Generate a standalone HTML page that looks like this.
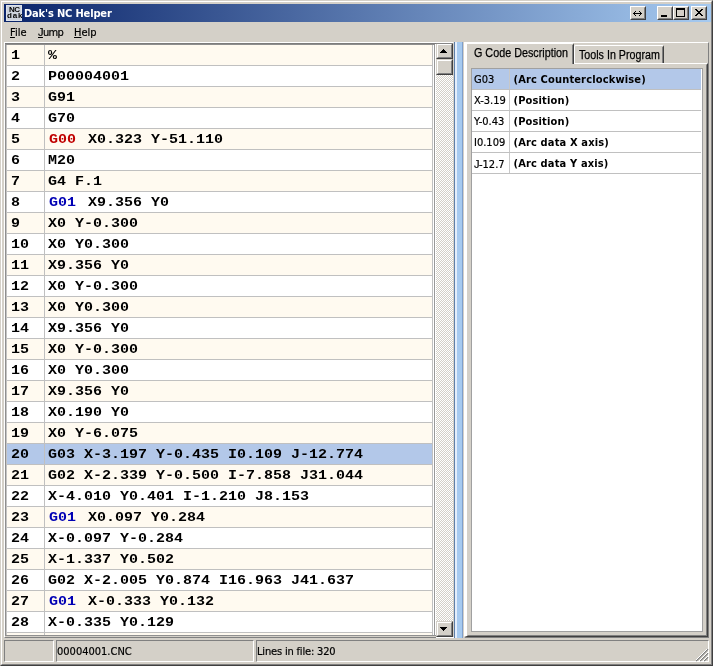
<!DOCTYPE html>
<html><head><meta charset="utf-8"><title>Dak's NC Helper</title>
<style>
*{box-sizing:border-box;margin:0;padding:0}
html,body{width:713px;height:666px;overflow:hidden;background:#d4d0c8}
body{position:relative;will-change:transform;font-family:"DejaVu Sans Condensed","Liberation Sans",sans-serif;font-size:11px;color:#000}
.abs{position:absolute}
#frame{position:absolute;left:0;top:0;width:713px;height:666px;border:1px solid;border-color:#d4d0c8 #404040 #404040 #d4d0c8}
#frame2{position:absolute;left:1px;top:1px;width:711px;height:664px;border:1px solid;border-color:#fff #808080 #808080 #fff}
#title{position:absolute;left:4px;top:4px;width:707px;height:18px;background:linear-gradient(to right,#0a246a 0%,#a6caf0 100%)}
#ticon{position:absolute;left:2px;top:1px;width:16px;height:16px;background:#ccd2dc;box-shadow:inset 0 0 0 1px #dde2ea;color:#000;font-family:"Liberation Sans",sans-serif;font-size:8px;line-height:8px;font-weight:bold;overflow:hidden}
#ticon span{position:absolute;left:1px;white-space:nowrap}
#ttext{position:absolute;left:20px;top:3px;color:#fff;font-weight:bold;font-size:11px;line-height:14px;white-space:nowrap;letter-spacing:-0.15px}
.tb{position:absolute;top:2px;width:16px;height:14px;background:#d4d0c8;border:1px solid;border-color:#fff #404040 #404040 #fff}
.tb:before{content:"";position:absolute;left:0;top:0;right:0;bottom:0;border:1px solid;border-color:#d4d0c8 #808080 #808080 #d4d0c8}
.tb svg{position:absolute;left:0;top:0}
#menu{position:absolute;left:4px;top:23px;width:705px;height:19px}
#menu span{position:absolute;top:3px;font-size:11px;line-height:13px;white-space:nowrap;-webkit-text-stroke:0.2px #000}
u{text-decoration:underline;text-decoration-skip-ink:none}
#list{position:absolute;left:4px;top:42px;width:450px;height:596px;background:#fff;border:1px solid;border-color:#fff #d4d0c8 #808080 #fff}
#list2{position:absolute;left:0;top:0;width:448px;height:594px;overflow:hidden}
.ln{position:absolute}
#rows{position:absolute;left:2px;top:2px;width:426px;height:590px;overflow:hidden;border-right:1px solid #c0c0c0}
#vline{position:absolute;left:429px;top:0;width:1px;height:594px;background:#989898}
.row{position:relative;height:21px;border-bottom:1px solid #c0c0c0;background:#fff;font-family:"Liberation Mono","DejaVu Sans Mono",monospace;font-weight:bold;font-size:15px;line-height:20px;white-space:nowrap}
.row.odd{background:#fffaf0}
.row.sel{background:#b3c8e9}
.row .n{position:absolute;left:0;top:0;width:38px;height:100%;border-right:1px solid #c0c0c0}
.row .n span{position:absolute;left:4px;top:1px;transform-origin:0 50%;transform:scaleY(0.9)}
.row .c{position:absolute;left:41px;top:1px;transform-origin:0 50%;transform:scaleY(0.9)}
.cr{color:#c00000;margin-left:1px;margin-right:3px}
.cb{color:#0000b4;margin-left:1px;margin-right:3px}
#sb{position:absolute;left:431px;top:0;width:17px;height:594px;background-color:#ebe9e5;background-image:conic-gradient(#fff 25%,#d4d0c8 0 50%,#fff 0 75%,#d4d0c8 0);background-size:2px 2px}
.btn{position:absolute;background:#d4d0c8;border:1px solid;border-color:#d4d0c8 #404040 #404040 #d4d0c8}
.btn:before{content:"";position:absolute;left:0;top:0;right:0;bottom:0;border:1px solid;border-color:#fff #808080 #808080 #fff}
.arr{position:absolute;left:4px;width:0;height:0;border:4px solid transparent}
#split{position:absolute;left:454px;top:42px;width:9px;height:596px;background:linear-gradient(to right,#5f7fa8 0 1px,#e4eefb 1px 3px,#a6caf0 3px 8px,#7f9fcb 8px 9px)}
#panel{position:absolute;left:464px;top:42px;width:245px;height:596px;border:1px solid;border-color:#fff #808080 #808080 #fff}
#tabc{position:absolute;left:464px;top:63px;width:244px;height:574px;border:1px solid;border-color:#fff #404040 #404040 #fff;border-left-width:3px}
#tabc:before{content:"";position:absolute;left:0;top:0;right:0;bottom:0;border:1px solid;border-color:#d4d0c8 #808080 #808080 #d4d0c8}
.tab{position:absolute;font-family:"Liberation Sans",sans-serif;font-size:12.5px;line-height:14px;white-space:nowrap;background:#d4d0c8}
#tab1{left:464px;top:43px;width:110px;height:21px;border:1px solid;border-color:#fff #404040 #d4d0c8 #fff;border-left-width:3px;border-bottom:none;border-radius:2px 2px 0 0}
#tab1:before{content:"";position:absolute;right:0;top:1px;bottom:0;width:1px;background:#808080}
#tab2{left:574px;top:45px;width:90px;height:18px;border:1px solid;border-color:#fff #404040 #d4d0c8 #fff;border-bottom:none;border-radius:2px 2px 0 0}
#tab2:before{content:"";position:absolute;right:0;top:1px;bottom:0;width:1px;background:#808080}
.tab span{position:absolute;-webkit-text-stroke:0.25px #000;transform-origin:0 0;transform:scaleX(0.845)}
#rl{position:absolute;left:471px;top:68px;width:232px;height:564px;background:#fff;border:1px solid #a0a0a0}
.rr{position:relative;margin-right:1px;height:21px;border-bottom:1px solid #c0c0c0;font-size:11px;line-height:20px;white-space:nowrap}
.rr.sel{background:#b3c8e9}
.rr .a{position:absolute;left:0;top:0;width:38px;height:100%;border-right:1px solid #c8c8c8;padding-left:2px;padding-top:1px;-webkit-text-stroke:0.2px #000}
.rr .b{position:absolute;left:41.5px;top:1px;font-weight:bold;letter-spacing:0.15px}
#status{position:absolute;left:4px;top:640px;width:705px;height:22px}
.sp{position:absolute;top:0;height:22px;border:1px solid;border-color:#808080 #fff #fff #808080;font-size:11px;line-height:22px;padding-left:0;white-space:nowrap;overflow:hidden;-webkit-text-stroke:0.2px #000}
</style></head><body>
<div id="frame"></div><div id="frame2"></div>
<div id="title">
 <div id="ticon"><span style="top:1px;left:3px;letter-spacing:-0.5px">NC</span><span style="top:7px;left:1px;letter-spacing:0.8px">dak</span></div>
 <div id="ttext">Dak's NC Helper</div>
 <div class="tb" style="left:626px"><svg width="14" height="12" viewBox="0 0 14 12"><path d="M4 4h1v1h-1zM8 4h1v1h-1zM3 5h1v1h-1zM9 5h1v1h-1zM2 6h9v1h-9zM3 7h1v1h-1zM9 7h1v1h-1zM4 8h1v1h-1zM8 8h1v1h-1z" fill="#000" shape-rendering="crispEdges"/></svg></div>
 <div class="tb" style="left:653px"><svg width="14" height="12" viewBox="0 0 14 12"><rect x="3" y="8" width="6" height="2" fill="#000"/></svg></div>
 <div class="tb" style="left:669px"><svg width="14" height="12" viewBox="0 0 14 12"><path d="M2 1H11V10H2Z M3 3V9H10V3Z" fill="#000" fill-rule="evenodd" shape-rendering="crispEdges"/></svg></div>
 <div class="tb" style="left:687px"><svg width="14" height="12" viewBox="0 0 14 12"><path d="M3 2h2v1h-2zM9 2h2v1h-2zM4 3h2v1h-2zM8 3h2v1h-2zM5 4h4v1h-4zM6 5h2v1h-2zM5 6h4v1h-4zM4 7h2v1h-2zM8 7h2v1h-2zM3 8h2v1h-2zM9 8h2v1h-2z" fill="#000" shape-rendering="crispEdges"/></svg></div>
</div>
<div id="menu"><span style="left:6px"><u>F</u>ile</span><span style="left:34px;letter-spacing:-0.6px"><u style="font-family:'Liberation Sans',sans-serif;font-size:11px">J</u>ump</span><span style="left:70px"><u>H</u>elp</span></div>
<div id="list"><div id="list2">
<div id="rows">
<div class="row odd"><div class="n"><span>1</span></div><div class="c">%</div></div>
<div class="row"><div class="n"><span>2</span></div><div class="c">P00004001</div></div>
<div class="row odd"><div class="n"><span>3</span></div><div class="c">G91</div></div>
<div class="row"><div class="n"><span>4</span></div><div class="c">G70</div></div>
<div class="row odd"><div class="n"><span>5</span></div><div class="c"><span class="cr">G00&nbsp;</span>X0.323 Y-51.110</div></div>
<div class="row"><div class="n"><span>6</span></div><div class="c">M20</div></div>
<div class="row odd"><div class="n"><span>7</span></div><div class="c">G4 F.1</div></div>
<div class="row"><div class="n"><span>8</span></div><div class="c"><span class="cb">G01&nbsp;</span>X9.356 Y0</div></div>
<div class="row odd"><div class="n"><span>9</span></div><div class="c">X0 Y-0.300</div></div>
<div class="row"><div class="n"><span>10</span></div><div class="c">X0 Y0.300</div></div>
<div class="row odd"><div class="n"><span>11</span></div><div class="c">X9.356 Y0</div></div>
<div class="row"><div class="n"><span>12</span></div><div class="c">X0 Y-0.300</div></div>
<div class="row odd"><div class="n"><span>13</span></div><div class="c">X0 Y0.300</div></div>
<div class="row"><div class="n"><span>14</span></div><div class="c">X9.356 Y0</div></div>
<div class="row odd"><div class="n"><span>15</span></div><div class="c">X0 Y-0.300</div></div>
<div class="row"><div class="n"><span>16</span></div><div class="c">X0 Y0.300</div></div>
<div class="row odd"><div class="n"><span>17</span></div><div class="c">X9.356 Y0</div></div>
<div class="row"><div class="n"><span>18</span></div><div class="c">X0.190 Y0</div></div>
<div class="row odd"><div class="n"><span>19</span></div><div class="c">X0 Y-6.075</div></div>
<div class="row sel"><div class="n"><span>20</span></div><div class="c">G03 X-3.197 Y-0.435 I0.109 J-12.774</div></div>
<div class="row odd"><div class="n"><span>21</span></div><div class="c">G02 X-2.339 Y-0.500 I-7.858 J31.044</div></div>
<div class="row"><div class="n"><span>22</span></div><div class="c">X-4.010 Y0.401 I-1.210 J8.153</div></div>
<div class="row odd"><div class="n"><span>23</span></div><div class="c"><span class="cb">G01&nbsp;</span>X0.097 Y0.284</div></div>
<div class="row"><div class="n"><span>24</span></div><div class="c">X-0.097 Y-0.284</div></div>
<div class="row odd"><div class="n"><span>25</span></div><div class="c">X-1.337 Y0.502</div></div>
<div class="row"><div class="n"><span>26</span></div><div class="c">G02 X-2.005 Y0.874 I16.963 J41.637</div></div>
<div class="row odd"><div class="n"><span>27</span></div><div class="c"><span class="cb">G01&nbsp;</span>X-0.333 Y0.132</div></div>
<div class="row"><div class="n"><span>28</span></div><div class="c">X-0.335 Y0.129</div></div>
<div class="row odd"><div class="n"><span></span></div><div class="c"></div></div></div>
<div id="vline"></div>
<div class="ln" style="left:0;top:0;width:1px;height:594px;background:#8e8e8e"></div><div class="ln" style="left:1px;top:0;width:1px;height:594px;background:#c4c4c4"></div>
<div class="ln" style="left:0;top:0;width:448px;height:1px;background:#7c7c7c"></div><div class="ln" style="left:1px;top:1px;width:429px;height:1px;background:#8e8e8e"></div>
<div class="ln" style="left:0;top:592px;width:431px;height:1px;background:#909090"></div><div class="ln" style="left:0;top:593px;width:431px;height:1px;background:#d4d0c8"></div>
<div id="sb">
 <div class="btn" style="left:0;top:0;width:17px;height:16px"><svg class="abs" style="left:0;top:0" width="15" height="15" viewBox="0 0 15 15"><path d="M6 5h1v1h-1zM5 6h3v1h-3zM4 7h5v1h-5zM3 8h7v1h-7z" fill="#000" shape-rendering="crispEdges"/></svg></div>
 <div class="btn" style="left:0;top:16px;width:17px;height:16px"></div>
 <div class="btn" style="left:0;bottom:0;width:17px;height:16px"><svg class="abs" style="left:0;top:0" width="15" height="15" viewBox="0 0 15 15"><path d="M3 5h7v1h-7zM4 6h5v1h-5zM5 7h3v1h-3zM6 8h1v1h-1z" fill="#000" shape-rendering="crispEdges"/></svg></div>
</div>
<div class="ln" style="left:431px;top:0;width:17px;height:1px;background:#868686"></div>
</div></div>
<div class="abs" style="left:436px;top:637px;width:18px;height:1px;background:#fff"></div>
<div id="split"></div>
<div id="panel"></div>
<div id="tabc"></div>
<div class="tab" id="tab2"><span style="left:4px;top:2px;transform:scaleX(0.855)">Tools In Program</span></div>
<div class="tab" id="tab1"><span style="left:7px;top:2px;transform:scaleX(0.862)">G Code Description</span></div>
<div id="rl">
<div class="rr sel"><div class="a">G03</div><div class="b">(Arc Counterclockwise)</div></div>
<div class="rr"><div class="a">X-3.19</div><div class="b">(Position)</div></div>
<div class="rr"><div class="a">Y-0.43</div><div class="b">(Position)</div></div>
<div class="rr"><div class="a">I0.109</div><div class="b">(Arc data X axis)</div></div>
<div class="rr"><div class="a"><span style="font-family:'Liberation Sans',sans-serif;letter-spacing:-0.5px">J</span>-12.7</div><div class="b">(Arc data Y axis)</div></div>
</div>
<div id="status">
 <div class="sp" style="left:0;width:50px"></div>
 <div class="sp" style="left:52px;width:198px">00004001.CNC</div>
 <div class="sp" style="left:252px;width:453px;letter-spacing:-0.17px">Lines in file: 320</div>
 <svg class="abs" style="right:0;bottom:0" width="13" height="13" viewBox="0 0 13 13"><path d="M12 0L0 12M12 4L4 12M12 8L8 12" stroke="#808080" stroke-width="1.5"/><path d="M12 -1L-1 12M12 3L3 12M12 7L7 12" stroke="#fff" stroke-width="1"/></svg>
</div>
</body></html>
